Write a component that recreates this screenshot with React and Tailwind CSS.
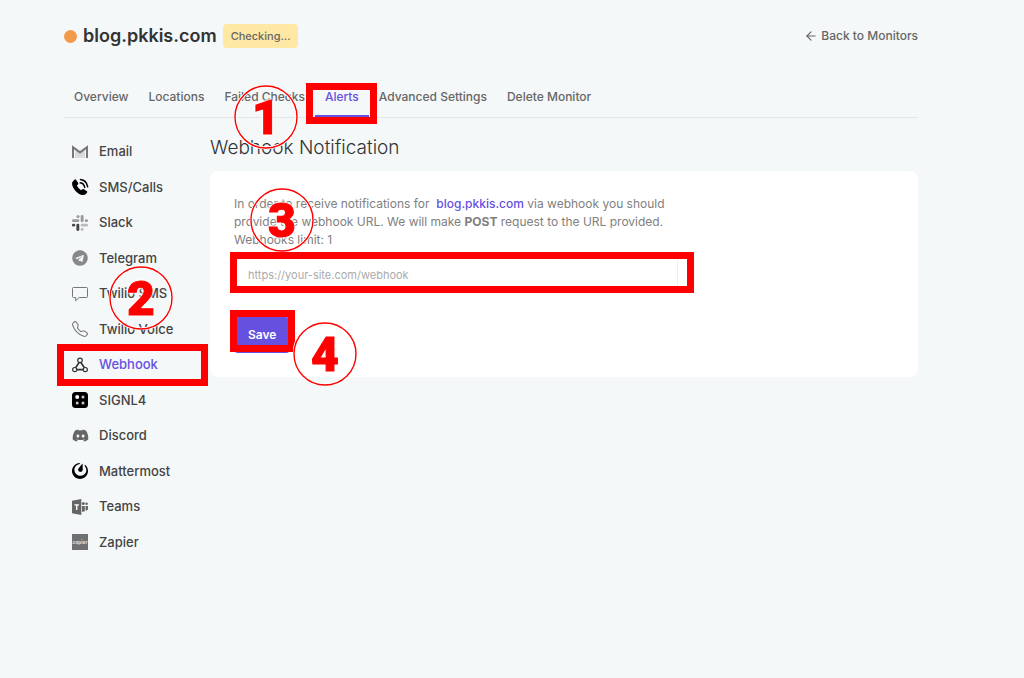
import React, { useState } from 'react';
import { FaTelegram, FaDiscord } from 'react-icons/fa';
import { BsTelephone } from 'react-icons/bs';
import { SiMattermost } from 'react-icons/si';
import { ArrowLeft } from 'lucide-react';

const GmailIcon = () => (
    <svg className="h-4 w-4" viewBox="0 0 16 16">
        <path d="M3 5.5 8 9l5-3.5V14H3z" fill="#d9dcdd" />
        <path d="M1 14V3.2L8 8.4l7-5.2V14" fill="none" stroke="#777" strokeWidth="2" />
    </svg>
);

const CallIcon = () => (
    <svg className="h-[18px] w-[18px]" viewBox="0 0 18 18">
        <path
            d="M1.2 4.2 3.6 1.6q.8-.6 1.4.2L7.2 5q.5.8-.2 1.5L5.8 7.6q1.2 2.8 4.3 4.6l1.3-1q.8-.5 1.5 0l3 2q.8.6.2 1.4-1.5 2.6-4 2.5-4.6-.6-8-4.700Q.5 8 1.2 4.200z"
            fill="#000"
        />
        <g fill="none" stroke="#000" strokeLinecap="round" strokeWidth="1.5">
            <path d="M9.5 1.5q6 .7 7.2 7.3" />
            <path d="M9.2 4.8q3.8.5 4.5 4.6" />
        </g>
    </svg>
);

const SlackIcon = () => (
    <svg className="h-4 w-4" viewBox="0 0 16 16">
        <g fill="#999">
            <rect x="4.5" y="0" width="3" height="3" rx="1.5" />
            <rect x="0" y="4.3" width="7.3" height="2.8" rx="1.4" />
            <rect x="8.7" y="0" width="2.9" height="7.2" rx="1.4" />
            <rect x="12.8" y="4.3" width="3.2" height="2.8" rx="1.4" />
            <rect x="8.7" y="8.8" width="7.3" height="2.8" rx="1.4" fill="#bbb" />
            <rect x="8.7" y="12.9" width="2.9" height="3.1" rx="1.4" fill="#bbb" />
        </g>
        <rect x="4.4" y="8.7" width="2.9" height="7.3" rx="1.4" fill="#444" />
        <rect x="0" y="8.7" width="3.2" height="2.9" rx="1.4" fill="#444" />
    </svg>
);

const ChatIcon = () => (
    <svg className="h-4 w-4" viewBox="0 0 16 16" fill="none" stroke="#777" strokeLinejoin="round">
        <path d="M1.5 1.5h13q1 0 1 1v8q0 1-1 1H7.2L3.6 14.8v-3.3H1.5q-1 0-1-1v-8q0-1 1-1z" />
    </svg>
);

const WebhookIcon = () => (
    <svg className="h-4 w-4" viewBox="0 0 16 16" fill="none" stroke="#333" strokeWidth="1.2">
        <circle cx="8" cy="3.4" r="2.3" />
        <circle cx="2.7" cy="12.6" r="2.1" />
        <circle cx="13.3" cy="12.6" r="2.1" />
        <path d="M7 5.6 3.6 10.7M9 5.6l3.4 5.1M4.8 12.6h6.4" strokeWidth="1.7" />
    </svg>
);

const Signl4Icon = () => (
    <svg className="h-4 w-4" viewBox="0 0 16 16">
        <rect width="16" height="16" rx="3.5" fill="#000" />
        <circle cx="5.2" cy="5" r="2" fill="#fff" />
        <circle cx="11" cy="5" r="1.5" fill="#ccc" />
        <circle cx="5.2" cy="11" r="1.5" fill="#ccc" />
        <circle cx="11" cy="11" r="1.5" fill="#ccc" />
    </svg>
);

const TeamsIcon = () => (
    <svg className="h-4 w-4" viewBox="0 0 16 16" fill="#666">
        <path d="M0 1.8 9.3 0v16L0 14.2z" />
        <path d="M2.4 5.2h4.6v1.3H5.4v4.6H4V6.5H2.4z" fill="#fff" />
        <circle cx="11.3" cy="4.6" r="1.5" />
        <circle cx="14.6" cy="4.8" r="1.3" />
        <path d="M10 7h2.8v5.2q-1.4.8-2.8.3zM13.5 7H16v3.5q-1 1.3-2.5.9z" />
    </svg>
);

const ZapierIcon = () => (
    <svg className="h-4 w-4" viewBox="0 0 16 16">
        <rect width="16" height="16" fill="#707070" />
        <text x="8" y="9.5" textAnchor="middle" fontSize="5" fontWeight="700" fill="#ddd">zapier</text>
    </svg>
);

const tabs = ['Overview', 'Locations', 'Failed Checks', 'Alerts', 'Advanced Settings', 'Delete Monitor'];

const channels = [
    { name: 'Email', icon: <GmailIcon /> },
    { name: 'SMS/Calls', icon: <CallIcon /> },
    { name: 'Slack', icon: <SlackIcon /> },
    { name: 'Telegram', icon: <FaTelegram className="h-4 w-4 text-[#888]" /> },
    { name: 'Twilio SMS', icon: <ChatIcon /> },
    { name: 'Twilio Voice', icon: <BsTelephone className="h-4 w-4 text-[#777]" /> },
    { name: 'Webhook', icon: <WebhookIcon /> },
    { name: 'SIGNL4', icon: <Signl4Icon /> },
    { name: 'Discord', icon: <FaDiscord className="h-[17px] w-[17px] text-[#666]" /> },
    { name: 'Mattermost', icon: <SiMattermost className="h-4 w-4 text-black" /> },
    { name: 'Teams', icon: <TeamsIcon /> },
    { name: 'Zapier', icon: <ZapierIcon /> },
];

// Numbered step marker laid over the page
const Step = ({ n, className }) => (
    <svg className={`pointer-events-none absolute z-20 h-16 w-16 ${className}`} viewBox="0 0 64 64">
        <circle cx="32" cy="32" r="31" fill="none" stroke="#fff" strokeWidth="3" />
        <circle cx="32" cy="32" r="31" fill="none" stroke="#f00" strokeWidth="1.4" />
        <text
            x="32"
            y="49"
            textAnchor="middle"
            className="font-['Roboto',sans-serif] text-5xl font-black [filter:drop-shadow(0_0_1px_#fff)_drop-shadow(0_0_1px_#fff)]"
            fill="#f00"
            stroke="#f00"
            strokeWidth="1"
        >
            {n}
        </text>
    </svg>
);

const Frame = ({ className }) => (
    <span className={`pointer-events-none absolute z-10 border-[7px] border-[#f00] ${className}`} />
);

const App = () => {
    const [url, setUrl] = useState('');

    return (
        <div className="min-h-screen bg-[#f4f8f9] pt-[22px] pr-[106px] pl-16 font-['Inter',sans-serif] text-xs text-[#666]">
            <header className="flex items-center justify-between">
                <div className="flex items-center">
                    <span className="mr-1.5 h-[13px] w-[13px] rounded-full bg-[#f2994a]" />
                    <h1 className="text-lg leading-7 font-semibold text-[#333]">blog.pkkis.com</h1>
                    <span className="ml-1.5 rounded-sm bg-[#ffe8a3] px-2 text-[11px] leading-6 font-medium">Checking...</span>
                </div>
                <a href="#monitors" className="flex items-center gap-[3px] font-medium">
                    <ArrowLeft className="h-3.5 w-3.5" />
                    Back to Monitors
                </a>
            </header>

            <nav className="mt-7 flex border-b border-[#e2e6e8] font-medium">
                {tabs.map((tab) => (
                    <div key={tab} className="relative">
                        <a
                            href="#tab"
                            className={`block border-b-2 px-[10px] pt-[9px] pb-2 leading-5 whitespace-nowrap ${
                                tab === 'Alerts' ? 'border-[#6550e0] text-[#6550e0]' : 'border-transparent'
                            }`}
                        >
                            {tab}
                        </a>
                        {tab === 'Failed Checks' && <Step n="1" className="top-[7px] left-5" />}
                        {tab === 'Alerts' && <Frame className="top-[5px] -right-2 -bottom-[7px] -left-[9px]" />}
                    </div>
                ))}
            </nav>

            <div className="flex">
                <aside className="mt-4 grid h-[426px] w-[146px] shrink-0 auto-rows-fr text-[13px]">
                    {channels.map(({ name, icon }) => (
                        <div key={name} className="relative flex items-center">
                            <a
                                href="#channel"
                                className={`flex items-center font-medium ${
                                    name === 'Webhook' ? 'text-[#6550e0]' : 'text-[#444]'
                                }`}
                            >
                                <span className="mr-[9px] ml-1.5 flex w-5 justify-center">{icon}</span>
                                {name}
                            </a>
                            {name === 'Twilio SMS' && <Step n="2" className="top-[-10px] left-[45px]" />}
                            {name === 'Webhook' && <Frame className="-inset-y-[3px] right-[2px] -left-[7px]" />}
                        </div>
                    ))}
                </aside>

                <main className="min-w-0 flex-1 pt-4">
                    <h2 className="text-[19px] leading-7 font-light text-[#333]">Webhook Notification</h2>
                    <form
                        className="mt-[9px] rounded-lg bg-white p-6"
                        onSubmit={(e) => e.preventDefault()}
                    >
                        <div className="relative max-w-[446px] leading-[18px] text-[#808080]">
                            In order to receive notifications for &nbsp;
                            <a href="#site" className="font-medium text-[#6550e0]">blog.pkkis.com</a> via webhook you
                            should provide the webhook URL. We will make <b className="font-bold">POST</b> request to the
                            URL provided.
                            <br />
                            Webhooks limit: 1
                            <Step n="3" className="-top-[7px] left-4" />
                        </div>
                        <div className="relative mt-[7px] w-full max-w-[444px]">
                            <input
                                type="text"
                                aria-label="Webhook URL"
                                placeholder="https://your-site.com/webhook"
                                value={url}
                                onChange={(e) => setUrl(e.target.value)}
                                className="block h-9 w-full rounded border border-[#eee] px-[13px] pt-0.5 text-[11px] placeholder:text-[#aaa]"
                            />
                            <Frame className="-top-1 -right-4 -bottom-px -left-1" />
                        </div>
                        <div className="relative mt-[25px] w-fit">
                            <button type="submit" className="block h-9 rounded bg-[#6550e0] px-3.5 font-semibold text-white">
                                Save
                            </button>
                            <Frame className="-top-[7px] -right-[5px] bottom-px -left-1" />
                            <Step n="4" className="top-[5px] left-[59px]" />
                        </div>
                    </form>
                </main>
            </div>
        </div>
    );
};

export default App;
